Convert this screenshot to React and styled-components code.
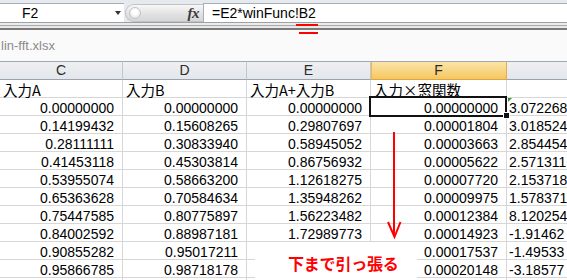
import React from 'react';
import styled, { createGlobalStyle } from 'styled-components';

const GlobalStyle = createGlobalStyle`
  html, body { margin: 0; padding: 0; background: #fff; }
  body { overflow: hidden; }
  #root { width: 567px; height: 280px; }
`;

const Window = styled.div`
  position: relative;
  width: 567px;
  height: 280px;
  overflow: hidden;
  background: #fafafa;
  font-family: "Liberation Sans", Arial, sans-serif;
  color: #000;
`;

const FormulaBar = styled.div`
  box-sizing: border-box;
  height: 23px;
  padding-top: 3px;
  background: #e6e9ed;
  border-bottom: 1px solid #9ba1a9;
  display: flex;
`;

const NameBox = styled.div`
  box-sizing: border-box;
  width: 124px;
  border-top: 1px solid #a7aeb6;
  background: #fff;
  display: flex;
  align-items: center;
  padding-left: 22px;
  font-size: 14px;
  line-height: 17px;
`;

const DropArrow = styled.span`
  margin-left: auto;
  margin-right: 3px;
  width: 0;
  height: 0;
  border-left: 3.5px solid transparent;
  border-right: 3.5px solid transparent;
  border-top: 4px solid #333;
`;

const ToolArea = styled.div`
  width: 79px;
  display: flex;
  align-items: stretch;
  padding: 1px 0 0 1px;
  box-sizing: border-box;
`;

const Pill = styled.div`
  flex: 1;
  box-sizing: border-box;
  border: 1px solid #c0c3c7;
  border-right: none;
  border-radius: 9px 0 0 9px;
  background: linear-gradient(#f8f8f8, #e2e2e2 55%, #d6d6d6);
  display: flex;
  align-items: center;
  padding-left: 3px;
`;

const Knob = styled.span`
  width: 10px;
  height: 10px;
  border-radius: 50%;
  border: 1px solid #c4c4c4;
  background: radial-gradient(circle at 50% 40%, #ffffff 30%, #d8d8d8 100%);
`;

const Fx = styled.span`
  margin-left: auto;
  margin-right: 4px;
  font-family: "Liberation Serif", "DejaVu Serif", serif;
  font-style: italic;
  font-weight: bold;
  font-size: 15px;
  color: #3a3a3a;
  letter-spacing: -0.5px;
`;

const FormulaInput = styled.div`
  flex: 1;
  box-sizing: border-box;
  border-top: 1px solid #a7aeb6;
  border-left: 1px solid #a7aeb6;
  background: #fff;
  display: flex;
  align-items: center;
  padding-left: 8px;
  font-size: 14px;
  line-height: 17px;
  white-space: nowrap;
`;

const Splitter = styled.div`
  height: 7px;
  background: linear-gradient(
    to bottom,
    #ececec 0 2px,
    #a9a9a9 2px 3px,
    #e9e9e9 3px 5px,
    #7b7b7b 5px 7px
  );
`;

const TabArea = styled.div`
  box-sizing: border-box;
  height: 31px;
  padding: 9px 0 0 1px;
  font-size: 13px;
  line-height: 13px;
  color: #8a8a8a;
  background: #fafafa;
`;

const Sheet = styled.div`
  display: grid;
  grid-template-columns: 123px 124px 124px 136px 1fr;
  background: #fff;
`;

const ColHeader = styled.div`
  box-sizing: border-box;
  height: 19px;
  border-top: 1px solid #a0a7b0;
  border-bottom: 1px solid ${(p) => (p.$active ? '#e3a43c' : '#9aa3ad')};
  border-right: 1px solid ${(p) => (p.$active ? '#e2ad52' : '#c2c7cd')};
  box-shadow: ${(p) => (p.$active ? 'inset 1px 0 #e8b860' : 'none')};
  background: ${(p) =>
    p.$active
      ? 'linear-gradient(#fbe4a8, #f8d683 50%, #f4c662)'
      : 'linear-gradient(#eef0f3, #e3e6ea)'};
  text-align: center;
  font-size: 14px;
  line-height: 17px;
  color: #2b2b2b;
`;

const Cell = styled.div`
  position: relative;
  box-sizing: border-box;
  height: 18px;
  border-right: 1px solid #d6d6d6;
  border-bottom: 1px solid #d6d6d6;
  display: flex;
  align-items: flex-end;
  justify-content: ${(p) => (p.$right ? 'flex-end' : 'flex-start')};
  padding: ${(p) => (p.$right ? '0 8px 0 0' : p.$jp ? '0 0 0 3px' : '0 0 0 2px')};
  font-family: ${(p) =>
    p.$jp ? '"Noto Sans CJK JP", sans-serif' : '"Liberation Sans", Arial, sans-serif'};
  font-size: ${(p) => (p.$jp ? '14.5px' : '14px')};
  line-height: 14px;
  white-space: nowrap;
  overflow: visible;
  z-index: ${(p) => (p.$selected ? 2 : 'auto')};

  ${(p) =>
    p.$selected &&
    `
    &::after {
      content: '';
      position: absolute;
      left: -2px;
      top: -2px;
      right: -1px;
      bottom: -2px;
      border: 2px solid #111;
      pointer-events: none;
    }
    &::before {
      content: '';
      position: absolute;
      right: -4px;
      bottom: -4px;
      width: 5px;
      height: 5px;
      background: #111;
      border: 1px solid #fff;
      z-index: 3;
    }
  `}

  ${(p) =>
    p.$flag &&
    `
    &::before {
      content: '';
      position: absolute;
      left: 1px;
      top: 0;
      width: 0;
      height: 0;
      border-top: 4px solid #2f9a2f;
      border-right: 4px solid transparent;
    }
  `}
`;

const Wide = styled.span`
  display: inline-block;
  width: 1em;
  text-align: center;
`;

const RedMark = styled.div`
  position: absolute;
  left: ${(p) => p.$x}px;
  top: ${(p) => p.$y}px;
  width: ${(p) => p.$w}px;
  height: 2px;
  background: #ff0000;
`;

const Arrow = styled.svg`
  position: absolute;
  left: 384px;
  top: 128px;
  width: 22px;
  height: 114px;
  overflow: visible;
`;

const LabelBox = styled.div`
  position: absolute;
  left: 255px;
  top: 242px;
  width: 162px;
  height: 40px;
  box-sizing: border-box;
  background: #fff;
  padding: 13px 0 0 33px;
  font-family: "Noto Sans CJK JP", sans-serif;
  font-weight: 700;
  font-size: 16px;
  line-height: 16px;
  color: #ff0000;
  white-space: nowrap;
  letter-spacing: -0.2px;
`;

const cols = ['C', 'D', 'E', 'F', ''];

const data = [
  ['0.00000000', '0.00000000', '0.00000000', '0.00000000', '3.072268'],
  ['0.14199432', '0.15608265', '0.29807697', '0.00001804', '3.018524'],
  ['0.28111111', '0.30833940', '0.58945052', '0.00003663', '2.854454'],
  ['0.41453118', '0.45303814', '0.86756932', '0.00005622', '2.571311'],
  ['0.53955074', '0.58663200', '1.12618275', '0.00007720', '2.153718'],
  ['0.65363628', '0.70584634', '1.35948262', '0.00009975', '1.578371'],
  ['0.75447585', '0.80775897', '1.56223482', '0.00012384', '8.120254'],
  ['0.84002592', '0.88987181', '1.72989773', '0.00014923', '-1.91462'],
  ['0.90855282', '0.95017211', '', '0.00017537', '-1.49533'],
  ['0.95866785', '0.98718178', '', '0.00020148', '-3.18577'],
  ['', '', '', '', ''],
];

export default function App() {
  return (
    <>
      <GlobalStyle />
      <Window>
        <FormulaBar>
          <NameBox>
            F2
            <DropArrow />
          </NameBox>
          <ToolArea>
            <Pill>
              <Knob />
              <Fx>fx</Fx>
            </Pill>
          </ToolArea>
          <FormulaInput>=E2*winFunc!B2</FormulaInput>
        </FormulaBar>
        <Splitter />
        <TabArea>lin-fft.xlsx</TabArea>
        <Sheet>
          {cols.map((c, i) => (
            <ColHeader key={'h' + i} $active={c === 'F'}>
              {c}
            </ColHeader>
          ))}
          <Cell $jp>入力A</Cell>
          <Cell $jp>入力B</Cell>
          <Cell $jp>入力A+入力B</Cell>
          <Cell $jp>
            入力<Wide>×</Wide>窓関数
          </Cell>
          <Cell />
          {data.map((row, r) =>
            row.map((v, c) => (
              <Cell
                key={r + '-' + c}
                $right={c < 4}
                $selected={r === 0 && c === 3}
                $flag={r === 0 && c === 4}
              >
                {v}
              </Cell>
            ))
          )}
        </Sheet>
        <RedMark $x={296} $y={24} $w={22} />
        <RedMark $x={299} $y={32} $w={19} />
        <Arrow viewBox="0 0 22 114">
          <line x1="10" y1="4" x2="10" y2="108" stroke="#ff0000" strokeWidth="2" />
          <polyline
            points="4,94 10.5,109 16.5,94"
            fill="none"
            stroke="#ff0000"
            strokeWidth="2"
            strokeLinejoin="miter"
          />
        </Arrow>
        <LabelBox>下まで引っ張る</LabelBox>
      </Window>
    </>
  );
}
